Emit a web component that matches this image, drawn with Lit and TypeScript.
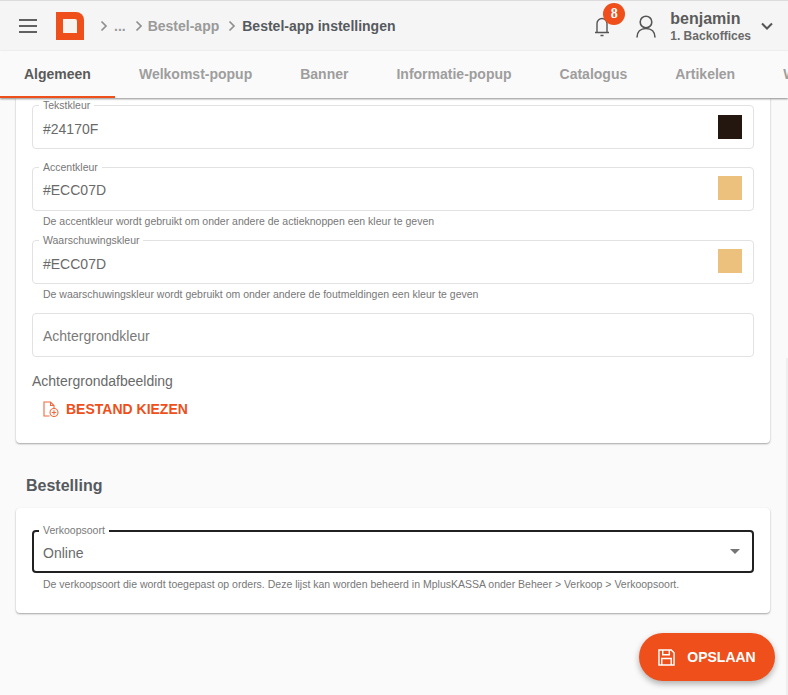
import { LitElement, html, css } from "lit";
import { customElement } from "lit/decorators.js";

const chev = html`<svg class="chev" viewBox="0 0 8 12" width="8" height="12"><path d="M1.500 1.500 6 6l-4.500 4.500" fill="none" stroke="#8f8f8f" stroke-width="1.700"/></svg>`;

@customElement("app-root")
export class AppRoot extends LitElement {
  static styles = css`
    :host { display: flex; flex-direction: column; position: relative; width: 788px; height: 695px; overflow: hidden; background: #fafafa; font-family: "Liberation Sans", Arial, sans-serif; color: #5f5f5f; }
    .top { flex: none; box-sizing: border-box; border-top: 1px solid #dcdcdc; border-bottom: 1px solid #e6e6e6; background: #f5f5f5; display: flex; align-items: center; height: 52px; margin-bottom: -1px; }
    .burger { margin-left: 19px; width: 18px; height: 14px; display: flex; flex-direction: column; justify-content: space-between; }
    .burger i { display: block; height: 2px; background: #616161; }
    .logo { margin-left: 19px; flex: none; display: block; }
    .crumbs { margin-left: 16px; display: flex; align-items: center; font-size: 14px; font-weight: 700; color: #9a9a9a; }
    .crumbs .dots { margin: 0 9px 0 6px; }
    .crumbs .mid { margin: 0 9px 0 5px; }
    .crumbs .cur { margin-left: 6px; color: #555a60; }
    .spacer { flex: 1; }
    .bell { position: relative; width: 16px; height: 24px; margin-right: 26px; }
    .bell svg { display: block; }
    .badge { position: absolute; left: 9px; top: -11px; width: 22px; height: 22px; border-radius: 50%; background: #ee4f1b; color: #fff; font: 700 14px "Liberation Serif", serif; display: flex; align-items: center; justify-content: center; }
    .user { margin-right: 14px; display: block; }
    .names { display: flex; flex-direction: column; }
    .name { font-size: 16px; font-weight: 700; color: #5b5b5b; line-height: 17px; }
    .role { font-size: 12px; font-weight: 700; color: #6a6a6a; line-height: 14px; margin-top: 2px; }
    .caret { margin: 0 14px 0 9px; display: block; }
    .tabs { flex: none; position: relative; z-index: 2; height: 47px; background: #fafafa; box-shadow: 0 1px 2px rgba(0,0,0,.45); display: flex; overflow: hidden; font-size: 14px; font-weight: 700; color: #9e9e9e; }
    .tab { flex: none; box-sizing: border-box; height: 47px; display: flex; align-items: center; justify-content: center; padding: 0 24px 1px; }
    .tab.on { color: #5a5a5a; border-bottom: 2px solid #ee4f1b; padding: 0 24px; }
    .content { flex: 1; overflow: hidden; padding: 0 18px 0 16px; background: #fafafa; }
    .card { background: #fff; border-radius: 0 0 4px 4px; box-shadow: 0 1px 2px rgba(0,0,0,.35); padding: 7px 16px 0; }
    .card.first { height: 345px; box-sizing: border-box; }
    .field { position: relative; height: 44px; box-sizing: border-box; border: 1px solid #e2e2e2; border-radius: 4px; display: flex; align-items: center; justify-content: space-between; padding: 0 11px 0 10px; font-size: 14px; color: #6a6a6a; }
    .field span.val { position: relative; top: 1px; }
    .field span.val.low { top: 2px; }
    .lab { position: absolute; left: 6px; top: -7px; padding: 0 4px; background: #fff; font-size: 10.500px; line-height: 12px; color: #777; }
    .sw { width: 24px; height: 24px; margin-bottom: 2px; }
    .sw.flat { margin-bottom: 0; }
    .help { font-size: 10.500px; line-height: 12px; color: #777; padding-left: 11px; margin-top: 4px; }
    .gap18 { margin-top: 18px; }
    .gap13 { margin-top: 13px; }
    .ph { color: #7a7a7a; }
    .bgl { margin-top: 16px; font-size: 14px; line-height: 16px; color: #6a6a6a; }
    .pick { display: flex; align-items: center; margin: 12px 0 0 11px; color: #ee4f1b; font-size: 14px; font-weight: 700; line-height: 16px; }
    .pick svg { margin-right: 7px; display: block; }
    h2 { margin: 34px 0 0 10px; font-size: 16px; line-height: 18px; font-weight: 700; color: #55595e; }
    .card.second { margin-top: 13px; height: 105px; box-sizing: border-box; border-radius: 4px; padding-top: 22px; }
    .select { border: 2px solid #212121; height: 43px; padding: 0 9px; }
    .select .lab { left: 5px; top: -8px; color: #7a7a7a; }
    .select + .help { margin-top: 5px; }
    .arrow { width: 0; height: 0; border-left: 5px solid transparent; border-right: 5px solid transparent; border-top: 5px solid #757575; margin-right: 3px; }
    .fab { position: absolute; left: 639px; top: 633px; width: 136px; height: 48px; border-radius: 24px; background: #ee4f1b; color: #fff; box-shadow: 0 3px 6px rgba(0,0,0,.3); display: flex; align-items: center; justify-content: center; font-size: 14px; font-weight: 700; }
    .fab svg { margin-right: 12px; display: block; }
    .thumb { position: absolute; right: 0; top: 358px; bottom: 0; width: 2px; background: #efefef; }
  `;

  render() {
    const tabs: [string, boolean?][] = [
      ["Algemeen", true], ["Welkomst-popup"], ["Banner"], ["Informatie-popup"],
      ["Catalogus"], ["Artikelen"], ["Weergave"],
    ];
    return html`
      <div class="top">
        <div class="burger"><i></i><i></i><i></i></div>
        <svg class="logo" width="28" height="28" viewBox="0 0 28 28"><path d="M0 0h20a8 8 0 0 1 8 8v20H0z" fill="#ee4f1b"/><path d="M7 7h12a2 2 0 0 1 2 2v12H7z" fill="#f7f3ef"/></svg>
        <div class="crumbs">
          ${chev}<span class="dots">...</span>${chev}<span class="mid">Bestel-app</span>${chev}<span class="cur">Bestel-app instellingen</span>
        </div>
        <div class="spacer"></div>
        <div class="bell">
          <svg width="16" height="24" viewBox="0 0 16 24"><path d="M3 18V9.500a5 5 0 0 1 10 0V18M1 18.500h14M6.500 21.500h3" fill="none" stroke="#555" stroke-width="1.400"/></svg>
          <div class="badge">8</div>
        </div>
        <svg class="user" width="20" height="23" viewBox="0 0 20 23"><circle cx="10" cy="7" r="5.800" fill="none" stroke="#555" stroke-width="1.600"/><path d="M1 22.500c0-5.500 3.500-9 9-9s9 3.500 9 9" fill="none" stroke="#555" stroke-width="1.600"/></svg>
        <div class="names"><span class="name">benjamin</span><span class="role">1. Backoffices</span></div>
        <svg class="caret" width="14" height="9" viewBox="0 0 14 9"><path d="M2 1.500 7 6.500l5-5" fill="none" stroke="#555" stroke-width="2"/></svg>
      </div>
      <div class="tabs">
        ${tabs.map(([t, on]) => html`<div class="tab ${on ? "on" : ""}">${t}</div>`)}
      </div>
      <div class="content">
        <div class="card first">
          <div class="field"><span class="lab">Tekstkleur</span><span class="val low">#24170F</span><div class="sw flat" style="background:#24170f"></div></div>
          <div class="field gap18"><span class="lab">Accentkleur</span><span class="val">#ECC07D</span><div class="sw" style="background:#ecc07d"></div></div>
          <div class="help">De accentkleur wordt gebruikt om onder andere de actieknoppen een kleur te geven</div>
          <div class="field gap13"><span class="lab">Waarschuwingskleur</span><span class="val low">#ECC07D</span><div class="sw" style="background:#ecc07d"></div></div>
          <div class="help">De waarschuwingskleur wordt gebruikt om onder andere de foutmeldingen een kleur te geven</div>
          <div class="field gap13 ph"><span class="val">Achtergrondkleur</span></div>
          <div class="bgl">Achtergrondafbeelding</div>
          <div class="pick">
            <svg width="16" height="16" viewBox="0 0 16 16"><path d="M6.500 15H1V1h6.500L11 4.500V7.500M7.500 1v3.500H11" fill="none" stroke="#ee6a3f" stroke-width="1.100"/><circle cx="11" cy="11.500" r="4" fill="none" stroke="#ee6a3f" stroke-width="1.100"/><path d="M11 9.300v4.400M8.800 11.500h4.400" stroke="#ee6a3f" stroke-width="1.100"/></svg>
            BESTAND KIEZEN
          </div>
        </div>
        <h2>Bestelling</h2>
        <div class="card second">
          <div class="field select"><span class="lab">Verkoopsoort</span><span class="val">Online</span><div class="arrow"></div></div>
          <div class="help">De verkoopsoort die wordt toegepast op orders. Deze lijst kan worden beheerd in MplusKASSA onder Beheer &gt; Verkoop &gt; Verkoopsoort.</div>
        </div>
      </div>
      <div class="thumb"></div>
      <div class="fab">
        <svg width="17" height="17" viewBox="0 0 18 18"><path d="M1 1h13l3 3v13H1zM5 1v5h7V1M4 17v-7h10v7" fill="none" stroke="#fff" stroke-width="1.500"/></svg>
        OPSLAAN
      </div>
    `;
  }
}
